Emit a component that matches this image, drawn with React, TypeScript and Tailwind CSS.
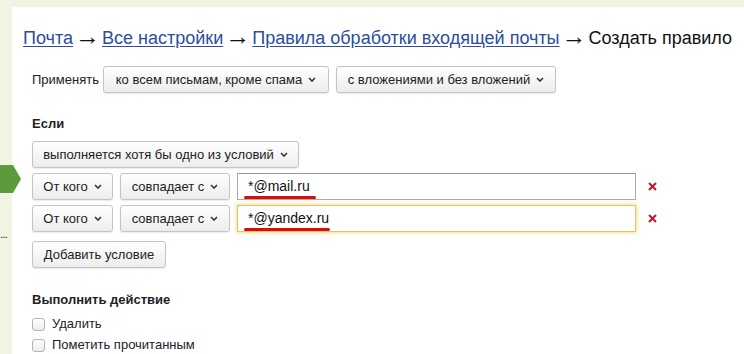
import React from "react";

const Chevron = () => (
  <svg width="8" height="5" viewBox="0 0 8 5" className="ml-[6px] shrink-0">
    <path d="M1 1 L4 4 L7 1" fill="none" stroke="#333" strokeWidth="1.6" />
  </svg>
);

const Btn = ({ children, w, chevron = true }: { children: React.ReactNode; w: string; chevron?: boolean }) => (
  <div
    className={`${w} h-[27px] flex items-center justify-center rounded-[3px] border border-[#c4c4c4] bg-gradient-to-b from-white to-[#ededed] text-[13px] text-[#222] shadow-[0_1px_1px_rgba(0,0,0,0.08)] shrink-0`}
  >
    <span>{children}</span>
    {chevron && <Chevron />}
  </div>
);

const Cross = () => (
  <svg width="9" height="9" viewBox="0 0 9 9" className="ml-[12px]">
    <path d="M1 1 L8 8 M8 1 L1 8" stroke="#d0102a" strokeWidth="2" />
  </svg>
);

const Checkbox = () => (
  <div className="w-[13px] h-[13px] rounded-[3px] border border-[#b4b4b4] bg-gradient-to-b from-white to-[#ececec]" />
);

const Arrow = () => (
  <span className="inline-block mx-[2px] text-[25px] leading-[18px] align-top">→</span>
);

export default function App() {
  return (
    <div
      className="relative w-[744px] h-[354px] overflow-hidden bg-[#f1f3e3] pt-[7px] pl-[12px]"
      style={{ fontFamily: '"Liberation Sans", Arial, sans-serif' }}
    >
      {/* green pointer on sidebar */}
      <svg width="21" height="28" viewBox="0 0 21 28" className="absolute left-0 top-[165px]">
        <path d="M0 0 H13 L21 14 L13 28 H0 Z" fill="#5c9a3c" />
      </svg>
      <div className="absolute left-0 top-[231px] text-[10px] leading-[8px] text-[#333] tracking-[-1px]">....</div>

      <div className="h-full bg-white pl-[11px] pt-[20px]">
        <div className="text-[18px] leading-[22px] text-[#111] whitespace-nowrap">
          <a className="text-[#2b4f9e] underline underline-offset-[2px]">Почта</a>
          <Arrow />
          <a className="text-[#2b4f9e] underline underline-offset-[2px]">Все настройки</a>
          <Arrow />
          <a className="text-[#2b4f9e] underline underline-offset-[2px]">Правила обработки входящей почты</a>
          <Arrow />
          <span>Создать правило</span>
        </div>

        <div className="pl-[9px]">
          <div className="mt-[17px] flex items-center text-[13px] text-[#222]">
            <span className="w-[71px]">Применять</span>
            <Btn w="w-[226px]">ко всем письмам, кроме спама</Btn>
            <div className="w-[7px]" />
            <Btn w="w-[220px]">с вложениями и без вложений</Btn>
          </div>

          <div className="mt-[23px] text-[13px] font-bold text-[#222] leading-[16px]">Если</div>

          <div className="mt-[9px]">
            <Btn w="w-[267px]">выполняется хотя бы одно из условий</Btn>
          </div>

          <div className="mt-[5px] flex items-center">
            <Btn w="w-[81px]">От кого</Btn>
            <div className="w-[7px]" />
            <Btn w="w-[110px]">совпадает с</Btn>
            <div className="w-[7px]" />
            <div className="relative w-[399px] h-[27px] border border-[#ababab] border-t-[#999] bg-white flex items-center pl-[10px] text-[14px] text-[#111]">
              *@mail.ru
              <div className="absolute left-[6px] top-[22px] w-[72px] h-[3px] rounded-full bg-[#d90f0f]" />
            </div>
            <Cross />
          </div>

          <div className="mt-[5px] flex items-center">
            <Btn w="w-[81px]">От кого</Btn>
            <div className="w-[7px]" />
            <Btn w="w-[110px]">совпадает с</Btn>
            <div className="w-[7px]" />
            <div className="relative w-[399px] h-[27px] border border-[#e2c36c] bg-white shadow-[0_0_4px_1px_rgba(245,210,100,0.7)] flex items-center pl-[10px] text-[14px] text-[#111]">
              *@yandex.ru
              <div className="absolute left-[6px] top-[22px] w-[86px] h-[3px] rounded-full bg-[#d90f0f]" />
            </div>
            <Cross />
          </div>

          <div className="mt-[9px]">
            <Btn w="w-[134px]" chevron={false}>Добавить условие</Btn>
          </div>

          <div className="mt-[24px] text-[13px] font-bold text-[#222] leading-[16px]">Выполнить действие</div>

          <div className="mt-[8px] flex items-center gap-[7px] text-[13px] leading-[16px] text-[#222]">
            <Checkbox />
            <span>Удалить</span>
          </div>
          <div className="mt-[5px] flex items-center gap-[7px] text-[13px] leading-[16px] text-[#222]">
            <Checkbox />
            <span>Пометить прочитанным</span>
          </div>
        </div>
      </div>
    </div>
  );
}
